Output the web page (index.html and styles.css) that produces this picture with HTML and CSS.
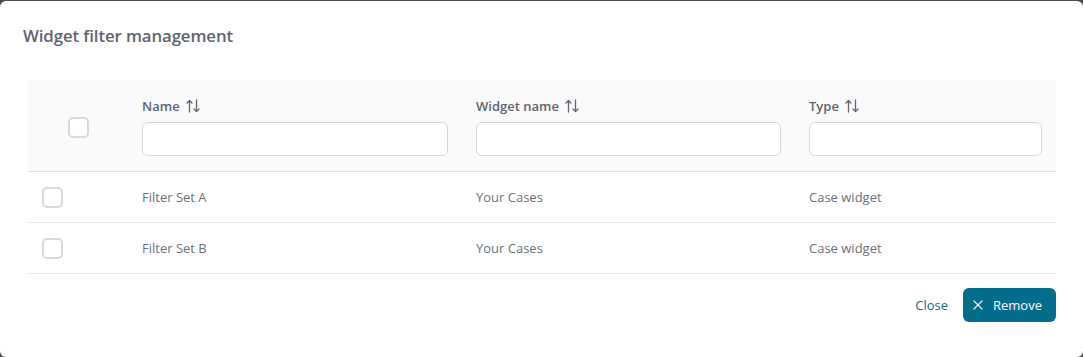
FILE: index.html
```html
<!DOCTYPE html>
<html lang="en">
<head>
<meta charset="utf-8">
<title>Widget filter management</title>
<link rel="stylesheet" href="styles.css">
</head>
<body>
<div class="modal">
  <h1 class="title">Widget filter management</h1>
  <div class="table">
    <div class="row head">
      <div class="cell check-cell center"><span class="checkbox"></span></div>
      <div class="cell">
        <div class="label">Name <svg class="sort" viewBox="0 0 14 14" width="14" height="14"><path d="M3.5 13V1.5M1 4L3.5 1.5L6 4M10.5 1v11.5M8 10l2.5 2.5L13 10" fill="none" stroke="#5f6672" stroke-width="1.3" stroke-linecap="round" stroke-linejoin="round"/></svg></div>
        <input class="input" type="text">
      </div>
      <div class="cell">
        <div class="label">Widget name <svg class="sort" viewBox="0 0 14 14" width="14" height="14"><path d="M3.5 13V1.5M1 4L3.5 1.5L6 4M10.5 1v11.5M8 10l2.5 2.5L13 10" fill="none" stroke="#5f6672" stroke-width="1.3" stroke-linecap="round" stroke-linejoin="round"/></svg></div>
        <input class="input" type="text">
      </div>
      <div class="cell">
        <div class="label">Type <svg class="sort" viewBox="0 0 14 14" width="14" height="14"><path d="M3.5 13V1.5M1 4L3.5 1.5L6 4M10.5 1v11.5M8 10l2.5 2.5L13 10" fill="none" stroke="#5f6672" stroke-width="1.3" stroke-linecap="round" stroke-linejoin="round"/></svg></div>
        <input class="input" type="text">
      </div>
    </div>
    <div class="row body">
      <div class="cell check-cell"><span class="checkbox"></span></div>
      <div class="cell">Filter Set A</div>
      <div class="cell">Your Cases</div>
      <div class="cell">Case widget</div>
    </div>
    <div class="row body">
      <div class="cell check-cell"><span class="checkbox"></span></div>
      <div class="cell">Filter Set B</div>
      <div class="cell">Your Cases</div>
      <div class="cell">Case widget</div>
    </div>
  </div>
  <div class="footer">
    <button class="btn-link" type="button">Close</button>
    <button class="btn-primary" type="button"><svg class="x" viewBox="0 0 10 10" width="10" height="10"><path d="M0.6 0.6L9.4 9.4M9.4 0.6L0.6 9.4" stroke="#ffffff" stroke-width="1.2" fill="none"/></svg><span>Remove</span></button>
  </div>
</div>
</body>
</html>
```

FILE: styles.css
```css
html, body {
  margin: 0;
  padding: 0;
}
body {
  background: #4b4b4b;
  font-family: "Open Sans", "Noto Sans", sans-serif;
  height: 357px;
  overflow: hidden;
}
.modal {
  margin-top: 1px;
  height: 356px;
  background: #ffffff;
  border-radius: 6px;
  box-sizing: border-box;
  padding: 0 27px 0 28px;
}
.title {
  margin: 0 0 0 -5px;
  padding-top: 23px;
  height: 79px;
  box-sizing: border-box;
  font-size: 16.8px;
  line-height: 24px;
  font-weight: 600;
  color: #5e6570;
  letter-spacing: -0.1px;
}
.table {
  display: flex;
  flex-direction: column;
}
.row {
  display: grid;
  grid-template-columns: 100px 334px 333px 1fr;
}
.row.head {
  background: #fafafa;
  border-bottom: 1px solid #d7e3e8;
}
.row.body {
  border-bottom: 1px solid #e9ebee;
  height: 50px;
  align-items: center;
  font-size: 13px;
  color: #6b717b;
}
.cell {
  padding: 0 14px;
  box-sizing: border-box;
}
.row.head .cell {
  padding-top: 16px;
  padding-bottom: 15px;
}
.row.head .check-cell {
  display: flex;
  align-items: center;
  justify-content: center;
  padding: 4px 0 0 0;
}
.row.body .check-cell {
  display: flex;
  align-items: center;
}
.checkbox {
  display: block;
  width: 21px;
  height: 21px;
  box-sizing: border-box;
  border: 2px solid #d8d9dc;
  border-radius: 5px;
  background: #ffffff;
}
.label {
  display: flex;
  align-items: center;
  gap: 6px;
  height: 20px;
  font-size: 13px;
  font-weight: 600;
  color: #5e6570;
  margin-bottom: 6px;
}
.sort {
  display: block;
}
.input {
  display: block;
  width: 100%;
  height: 34px;
  box-sizing: border-box;
  border: 1px solid #d5d7da;
  border-radius: 6px;
  background: #ffffff;
  margin: 0;
  padding: 0 10px;
  font: inherit;
}
.footer {
  display: flex;
  justify-content: flex-end;
  align-items: center;
  gap: 15px;
  margin-top: 14px;
}
.btn-link {
  border: 0;
  background: none;
  padding: 0;
  font-family: inherit;
  font-size: 13px;
  color: #0b6b8b;
  cursor: pointer;
}
.btn-primary {
  display: flex;
  align-items: center;
  gap: 10px;
  height: 34px;
  width: 93px;
  box-sizing: border-box;
  padding: 0 0 0 10px;
  border: 0;
  border-radius: 6px;
  background: #046d8c;
  color: #ffffff;
  font-family: inherit;
  font-size: 13px;
  cursor: pointer;
}
.x {
  display: block;
}
```
